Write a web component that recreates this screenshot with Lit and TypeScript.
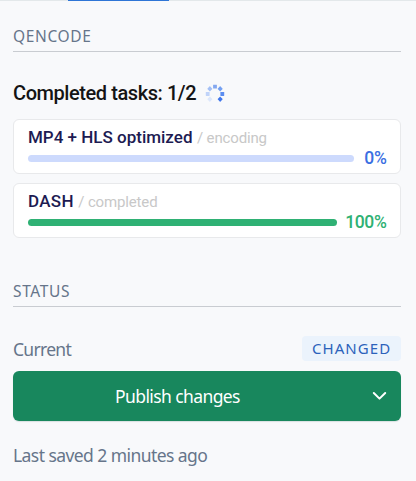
import { LitElement, html, svg, css } from "lit";
import { customElement, property } from "lit/decorators.js";
import { styleMap } from "lit/directives/style-map.js";

@customElement("busy-ring")
class BusyRing extends LitElement {
  static styles = css`
    :host { display: block; width: 20px; height: 20px; margin-top: 2px; }
    svg { display: block; }
  `;
  render() {
    const dots = [
      { angle: 0, color: "#84a8ef" },
      { angle: 45, color: "#74a0f2" },
      { angle: 90, color: "#5b8df0" },
      { angle: 135, color: "#3f76ec" },
      { angle: 225, color: "#dce7fc" },
      { angle: 270, color: "#c0d3f9" },
      { angle: 315, color: "#a2bff6" },
    ];
    return html`<svg width="20" height="20" viewBox="-10 -10 20 20">
      ${dots.map((d) => svg`<rect x="-1.9" y="-9.2" width="3.8" height="3.8" rx=".3" fill=${d.color} transform="rotate(${d.angle})"></rect>`)}
    </svg>`;
  }
}

@customElement("task-card")
class TaskCard extends LitElement {
  @property() name = "";
  @property() status = "";
  @property() percent = "";
  @property() color = "";
  @property() track = "";
  @property() spacing = "0px";
  static styles = css`
    :host { display: block; box-sizing: border-box; height: 55px; padding: 6px 14px 0; background: #fff; border: 1px solid #e8e9eb; border-radius: 6px; }
    .title { display: flex; align-items: baseline; height: 23px; line-height: 22px; white-space: pre; }
    .name { color: #1d1b52; font-size: 17px; font-weight: 500; }
    .status { color: #c8c8c8; font-size: 15px; letter-spacing: -0.15px; margin-left: 4.5px; }
    .progress { display: flex; align-items: center; height: 18px; gap: 8.5px; }
    .bar { flex: 1; height: 7px; border-radius: 4px; }
    .percent { min-width: 24px; text-align: right; font-size: 17.5px; font-weight: 500; line-height: 18px; letter-spacing: -0.4px; margin-right: -0.4px; }
  `;
  render() {
    return html`
      <div class="title">
        <span class="name" style=${styleMap({ letterSpacing: this.spacing })}>${this.name}</span>
        <span class="status">/ ${this.status}</span>
      </div>
      <div class="progress">
        <div class="bar" style=${styleMap({ background: this.track })}></div>
        <span class="percent" style=${styleMap({ color: this.color })}>${this.percent}</span>
      </div>`;
  }
}

@customElement("app-root")
class AppRoot extends LitElement {
  static styles = css`
    :host { display: block; box-sizing: border-box; width: 416px; height: 481px; overflow: hidden; background: #f8f9fb; font-family: "Noto Sans", sans-serif; color: #66758a; }
    .tabs { height: 1px; background: #e3e8ea; }
    .active { width: 101px; height: 1px; margin-left: 68px; background: #2e75d6; }
    .panel { padding: 0 15px 0 13px; }
    .heading { box-sizing: border-box; height: 51px; padding-top: 24px; line-height: 22px; font-size: 15.5px; letter-spacing: 0.65px; border-bottom: 1px solid #c9ccd1; }
    .tasks { font-family: Roboto, sans-serif; }
    .summary { display: flex; align-items: center; gap: 9px; height: 26px; margin-top: 28px; color: #141414; font-size: 20px; font-weight: 500; letter-spacing: -0.43px; white-space: nowrap; }
    .list { display: grid; gap: 9px; margin-top: 13px; }
    .second { height: 51px; margin-top: 18px; }
    .current { display: flex; align-items: center; justify-content: space-between; height: 25px; margin-top: 29px; }
    .label { font-size: 17.5px; line-height: 25px; letter-spacing: -0.7px; padding-top: 2px; }
    .badge { box-sizing: border-box; width: 99px; height: 25px; padding-left: 10px; line-height: 25px; border-radius: 4px; background: #ebf3fc; color: #2b62bb; font-size: 15px; letter-spacing: 1.05px; white-space: nowrap; }
    .publish { display: flex; align-items: center; box-sizing: border-box; width: 100%; height: 50px; margin: 10px 0 0; padding: 0 14px 0 0; border: 0; border-radius: 6px; background: #18875d; color: #fff; font: 17.5px "Noto Sans", sans-serif; box-shadow: 0 1px 1px #d9e0e2; }
    .action { flex: 1; letter-spacing: -0.6px; margin-right: 30px; text-align: center; }
    .saved { margin-top: 22px; font-size: 17.5px; line-height: 25px; letter-spacing: -0.57px; white-space: nowrap; }
  `;
  render() {
    return html`
      <div class="tabs"><div class="active"></div></div>
      <div class="panel">
        <div class="heading"><span>QENCODE</span></div>
        <section class="tasks">
          <div class="summary"><span>Completed tasks: 1/2</span><busy-ring></busy-ring></div>
          <div class="list">
            <task-card name="MP4 + HLS optimized" status="encoding" percent="0%" color="#3b6fe2" track="#cddafd"></task-card>
            <task-card name="DASH" status="completed" percent="100%" color="#2fb174" track="#2fb174" spacing="0.3px"></task-card>
          </div>
        </section>
        <div class="heading second"><span>STATUS</span></div>
        <div class="current"><span class="label">Current</span><span class="badge">CHANGED</span></div>
        <button class="publish">
          <span class="action"><span>Publish changes</span></span>
          <svg width="15" height="10" viewBox="0 0 15 10" fill="none" stroke="#fff" stroke-width="2" stroke-linecap="round" stroke-linejoin="round"><path d="M1.8 2 7.5 7.6 13.2 2"></path></svg>
        </button>
        <div class="saved"><span>Last saved 2 minutes ago</span></div>
      </div>`;
  }
}
